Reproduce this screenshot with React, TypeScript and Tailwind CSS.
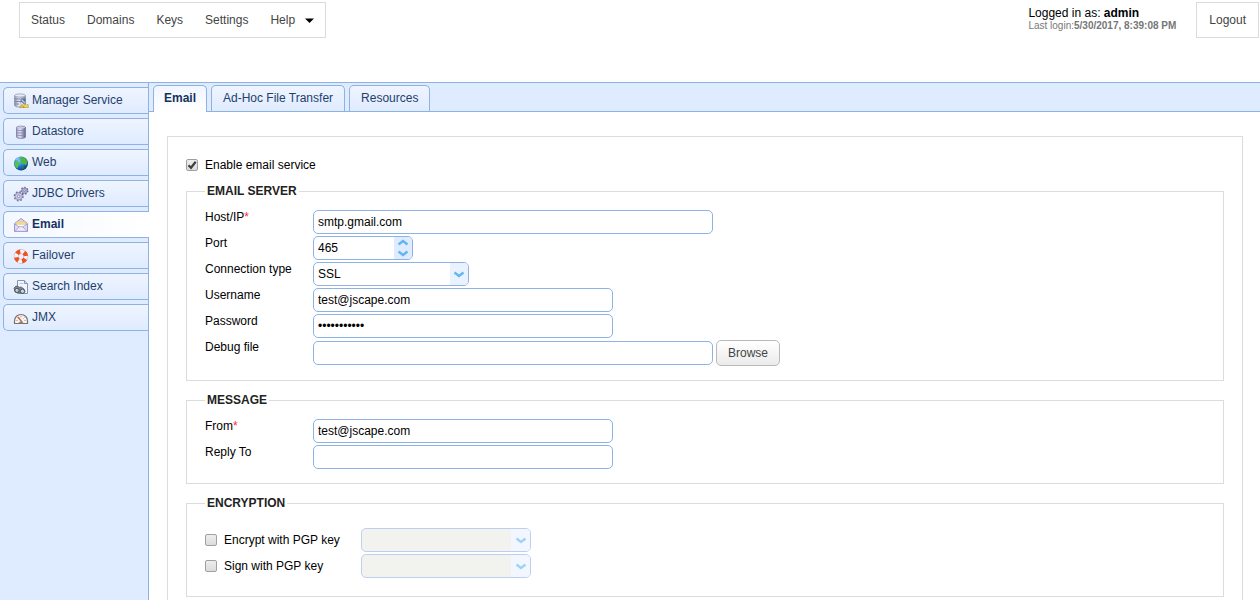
import React, { useState } from "react";

type IconProps = { children: React.ReactNode };

function Icon({ children }: IconProps) {
  return (
    <svg viewBox="0 0 16 16" className="mt-[3px] size-4 shrink-0" aria-hidden="true">
      {children}
    </svg>
  );
}

function ManagerIcon() {
  return (
    <Icon>
      <defs>
        <linearGradient id="mgr" x1="0" x2="1">
          <stop offset="0" stopColor="#8c94a8" />
          <stop offset=".4" stopColor="#e8edf6" />
          <stop offset="1" stopColor="#7f88a4" />
        </linearGradient>
      </defs>
      <path d="M1.500 2.500v9.500c0 1.400 2 2 4.500 2h6.500V2.500z" fill="url(#mgr)" stroke="#858da3" strokeWidth=".7" />
      <ellipse cx="7" cy="2.500" rx="5.500" ry="1.600" fill="#e6ecf6" stroke="#8a92a8" strokeWidth=".7" />
      <path d="M2 6h5M2 8.500h5M2 11h4" stroke="#707a98" strokeWidth=".9" />
      <path d="M7.500 5.500h5v5h-5z" fill="#5d6f9d" />
      <path d="M8.500 6.500l3.500 3.500" stroke="#b9cbe8" strokeWidth="1.200" />
      <path d="M8 9.500l3 3.500" stroke="#e3e6eb" strokeWidth="1.800" />
      <path d="M6.500 14.500l2.500-3 2.300 3z" fill="#f3c62f" stroke="#a98420" strokeWidth=".5" />
      <path d="M10.500 14.500l1-4 2 1.500 1.500-.8.500 3.300z" fill="#f8d84a" stroke="#a98420" strokeWidth=".5" />
    </Icon>
  );
}

function DatastoreIcon() {
  return (
    <Icon>
      <defs>
        <linearGradient id="dst" x1="0" x2="1">
          <stop offset="0" stopColor="#a6a6c6" />
          <stop offset=".4" stopColor="#e4e4f4" />
          <stop offset="1" stopColor="#55557f" />
        </linearGradient>
      </defs>
      <path d="M3.500 3.500c0-1.800 9-1.800 9 0v9.500c0 1.800-9 1.800-9 0z" fill="url(#dst)" stroke="#77779f" strokeWidth=".8" />
      <ellipse cx="8" cy="3.500" rx="4.100" ry="1" fill="#c9c9e2" />
      <path d="M4 6c2 .8 6 .8 8 0M4 8.500c2 .8 6 .8 8 0M4 11c2 .8 6 .8 8 0" fill="none" stroke="#8585ab" strokeWidth=".8" />
    </Icon>
  );
}

function WebIcon() {
  return (
    <Icon>
      <defs>
        <radialGradient id="web" cx=".35" cy=".3" r=".8">
          <stop offset="0" stopColor="#7cc4fa" />
          <stop offset=".55" stopColor="#1d74d2" />
          <stop offset="1" stopColor="#0a2c6c" />
        </radialGradient>
      </defs>
      <circle cx="8" cy="8.500" r="7" fill="url(#web)" />
      <path d="M6.500 2.200c1.500-.7 4-.2 5.500 1.100 1.500 1.400 2.300 3 2.300 4.500l-1.300 2.700-1.500-1.200-2 .3-1.500-1.500.3-2L7 5.500l1-1.500z" fill="#4cb838" />
      <path d="M2 6.500L4.200 6l2 1.500.3 1.700-1.500 2-.3 2.500C2.500 12.500 1.500 10 1.500 8.500z" fill="#55c440" />
      <path d="M8.500 11.500l2 .3.500 1.300-1.700 1.400z" fill="#2a8526" />
      <path d="M3.300 5c1-1.300 2-2 3.200-2.300" stroke="#bce7ff" strokeWidth=".8" fill="none" />
    </Icon>
  );
}

function GearsIcon() {
  return (
    <Icon>
      <circle cx="5.700" cy="10.300" r="4.200" fill="#b9b9d6" stroke="#77779f" strokeWidth="1.800" strokeDasharray="1.650 1.650" />
      <circle cx="5.700" cy="10.300" r="3.400" fill="#cdcde4" stroke="#8f8fb6" strokeWidth=".7" />
      <circle cx="5.700" cy="10.300" r="1.300" fill="#f4f6ff" stroke="#77779e" strokeWidth=".8" />
      <circle cx="11.500" cy="4.700" r="3.200" fill="#a9a9cb" stroke="#6a6a96" strokeWidth="1.600" strokeDasharray="1.440 1.440" />
      <circle cx="11.500" cy="4.700" r="2.500" fill="#bdbdd8" stroke="#7f7fa8" strokeWidth=".6" />
      <circle cx="11.500" cy="4.700" r=".9" fill="#f4f6ff" stroke="#666690" strokeWidth=".7" />
    </Icon>
  );
}

function EmailIcon() {
  return (
    <Icon>
      <path d="M1.500 6.500L8 1.500l6.500 5v8h-13z" fill="#dcd9f5" stroke="#9a95cb" />
      <path d="M3.500 5.500h9V9L8 11 3.500 9z" fill="#fffdf2" />
      <path d="M3.200 4.700h9.600v2.600H3.200z" fill="#f4dc93" stroke="#d8bd70" strokeWidth=".5" />
      <path d="M2 14.300l4.300-4.600h3.400l4.300 4.600z" fill="#eeecfc" stroke="#a19cd0" strokeWidth=".8" />
      <path d="M1.700 7l4.600 3M14.300 7L9.700 10" stroke="#a19cd0" strokeWidth=".9" />
    </Icon>
  );
}

function FailoverIcon() {
  return (
    <Icon>
      <circle cx="8" cy="8.500" r="4.900" fill="none" stroke="#b5aaa8" strokeWidth="4.600" />
      <circle cx="8" cy="8.500" r="4.900" fill="none" stroke="#f7f5f4" strokeWidth="3.800" />
      <circle cx="8" cy="8.500" r="4.900" fill="none" stroke="#f05022" strokeWidth="4.400" strokeDasharray="3.850 3.850" strokeDashoffset="5.200" />
    </Icon>
  );
}

function SearchIcon() {
  return (
    <Icon>
      <path d="M4.500 1.500h7l3 3v10h-10z" fill="#f1f6fd" stroke="#8296b4" />
      <path d="M11.500 1.500v3h3" fill="#cbdaf0" stroke="#8296b4" />
      <path d="M6.500 4.500h4" stroke="#b9c9e0" />
      <path d="M1 9l2-2 2 .3 1.200.9 2-.2 2.800 2 1 2.500-2 2-8-1.500z" fill="#7b848d" stroke="#4d555e" strokeWidth=".7" />
      <circle cx="4" cy="11.500" r="2.100" fill="#b4c2cd" stroke="#3d454d" strokeWidth=".8" />
      <circle cx="9.500" cy="12.300" r="2.100" fill="#b9d9e6" stroke="#3d454d" strokeWidth=".8" />
      <path d="M3 11l1-.8M8.500 11.800l1-.8" stroke="#fff" strokeWidth=".8" />
    </Icon>
  );
}

function GaugeIcon() {
  return (
    <Icon>
      <path d="M1.500 13.500V11C1.500 7 4.500 4.500 8 4.500s6.500 2.500 6.500 6.500v2.500z" fill="#f6f4f1" stroke="#77736f" strokeWidth="1.200" />
      <path d="M3.500 10.500h1M4.700 7.700l.7.700M8 6.200v1M11.300 7.700l-.7.700M12.500 10.500h-1" stroke="#77736f" strokeWidth=".8" />
      <path d="M5 7l4 5" stroke="#e2562d" strokeWidth="1.300" />
      <path d="M5.500 13.200c.5-2.200 4.500-2.200 5 0z" fill="#8a8681" />
    </Icon>
  );
}

const sections = [
  { name: "Manager Service", icon: ManagerIcon },
  { name: "Datastore", icon: DatastoreIcon },
  { name: "Web", icon: WebIcon },
  { name: "JDBC Drivers", icon: GearsIcon },
  { name: "Email", icon: EmailIcon },
  { name: "Failover", icon: FailoverIcon },
  { name: "Search Index", icon: SearchIcon },
  { name: "JMX", icon: GaugeIcon },
];

const tabs = ["Email", "Ad-Hoc File Transfer", "Resources"];

const inputClass =
  "block h-6 rounded-[5px] border border-[#8db2e3] bg-white px-1 text-xs text-black outline-none focus:border-[#4f8ad6] disabled:bg-[#ebece5]";

function Chevron({ up = false }: { up?: boolean }) {
  return (
    <svg viewBox="0 0 12 7" className="h-[7px] w-3" aria-hidden="true">
      <path d={up ? "M1.500 5.500L6 2l4.500 3.500" : "M1.500 1.500L6 5l4.500-3.500"} fill="none" stroke="#62b5f2" strokeWidth="2.400" />
    </svg>
  );
}

function Field({ id, label, required, children }: { id: string; label: string; required?: boolean; children: React.ReactNode }) {
  return (
    <div className="grid grid-cols-[108px_1fr] items-start">
      <label htmlFor={id} className="leading-[14px]">
        {label}
        {required && <span className="text-red-500">*</span>}
      </label>
      {children}
    </div>
  );
}

function Group({ title, children, className }: { title: string; children: React.ReactNode; className: string }) {
  return (
    <fieldset className={`border border-[#dcdcdc] px-[18px] ${className}`}>
      <legend className="px-0.5 text-xs leading-[14px] font-bold text-[#222] uppercase">{title}</legend>
      {children}
    </fieldset>
  );
}

function Check({ id, defaultChecked }: { id: string; defaultChecked?: boolean }) {
  return (
    <span className="relative block size-3">
      <input
        id={id}
        type="checkbox"
        defaultChecked={defaultChecked}
        className="peer block size-3 appearance-none rounded-xs border border-[#a0a0a0] bg-linear-to-b from-[#ededed] to-[#dcdcdc]"
      />
      <svg viewBox="0 0 12 12" className="pointer-events-none absolute inset-0 hidden size-3 peer-checked:block" aria-hidden="true">
        <path d="M2.500 6.300L5 8.800 9.700 2.800" fill="none" stroke="#3f3f3f" strokeWidth="2.200" />
      </svg>
    </span>
  );
}

function PgpRow({ id, label }: { id: string; label: string }) {
  return (
    <div className="grid grid-cols-[19px_137px_1fr] items-center">
      <Check id={id} />
      <label htmlFor={id}>{label}</label>
      <div className="relative w-[170px] opacity-60">
        <select disabled aria-label={`${label} name`} className={`${inputClass} w-full appearance-none`} />
        <span className="pointer-events-none absolute inset-y-px right-px flex w-[19px] items-center justify-center rounded-r bg-[#eaf2ff]">
          <Chevron />
        </span>
      </div>
    </div>
  );
}

export default function App() {
  const [port, setPort] = useState(465);

  return (
    <div className="flex h-screen flex-col overflow-hidden bg-white font-['Liberation_Sans',Arial,sans-serif] text-xs text-black">
      <header className="flex h-[82px] shrink-0 items-start justify-between pt-0.5 pr-px pl-[19px]">
        <nav className="flex h-9 items-center gap-[22px] border border-[#dcdcdc] px-[11px] text-[#444]">
          <a href="#status">Status</a>
          <a href="#domains">Domains</a>
          <a href="#keys">Keys</a>
          <a href="#settings">Settings</a>
          <button type="button" className="flex items-center gap-2.5">
            Help
            <svg viewBox="0 0 9 5" className="h-[5px] w-[9px]" aria-hidden="true">
              <path d="M0 .500h9L4.500 5z" fill="#000" />
            </svg>
          </button>
        </nav>
        <div className="flex items-start gap-5">
          <div className="pt-1">
            <p className="leading-[14px]">
              Logged in as: <b>admin</b>
            </p>
            <p className="text-[10px] leading-3 text-[#777]">
              Last login:<b>5/30/2017, 8:39:08 PM</b>
            </p>
          </div>
          <button type="button" className="h-9 border border-[#dcdcdc] px-3 text-[#444]">
            Logout
          </button>
        </div>
      </header>

      <div className="flex min-h-0 flex-1 border-t border-[#8db2e3]">
        <aside className="flex w-[149px] shrink-0 flex-col gap-1 border-r border-[#8db2e3] bg-[#dfebff] pt-1 pl-[3px]">
          {sections.map(({ name, icon: SectionIcon }) => (
            <button
              key={name}
              type="button"
              className={
                name === "Email"
                  ? "-mr-px flex h-[27px] items-center gap-[3px] rounded-l-[5px] border border-r-0 border-[#8db2e3] bg-linear-to-r from-[#f3f8ff] to-white pb-0.5 pl-[9px] font-bold text-[#15325f]"
                  : "flex h-[27px] items-center gap-[3px] rounded-l-[5px] border border-r-0 border-[#8db2e3] bg-linear-to-b from-[#eff5ff] to-[#dfebff] pb-0.5 pl-[9px] text-[#243f6b]"
              }
            >
              <SectionIcon />
              {name}
            </button>
          ))}
        </aside>

        <main className="min-w-0 flex-1">
          <div role="tablist" className="flex h-[29px] items-end gap-1 border-b border-[#8db2e3] bg-[#dfebff] pl-1">
            {tabs.map((tab) => (
              <button
                key={tab}
                type="button"
                role="tab"
                aria-selected={tab === "Email"}
                className={
                  tab === "Email"
                    ? "-mb-px h-[27px] rounded-t-[5px] border border-b-0 border-[#8db2e3] bg-linear-to-b from-[#f0f6ff] to-white px-2.5 pb-0.5 font-bold text-[#15325f]"
                    : "h-[26px] rounded-t-[5px] border border-b-0 border-[#8db2e3] bg-linear-to-b from-[#eff5ff] to-[#dfebff] px-[11px] pb-0.5 text-[#243f6b]"
                }
              >
                {tab}
              </button>
            ))}
          </div>

          <form className="mt-6 mr-[17px] ml-[18px] flex flex-col gap-3 border border-[#dcdcdc] p-[18px]" onSubmit={(e) => e.preventDefault()}>
            <div className="flex h-[17px] items-center gap-[7px] pt-0.5">
              <Check id="enable" defaultChecked />
              <label htmlFor="enable">Enable email service</label>
            </div>

            <Group title="Email Server" className="pt-3 pb-3.5">
              <div className="flex flex-col gap-0.5">
                <Field id="host" label="Host/IP" required>
                  <input id="host" type="text" defaultValue="smtp.gmail.com" className={`${inputClass} w-[400px]`} />
                </Field>
                <Field id="port" label="Port">
                  <div className="flex h-6 w-[100px] overflow-hidden rounded-[5px] border border-[#8db2e3]">
                    <input
                      id="port"
                      type="text"
                      inputMode="numeric"
                      value={port}
                      onChange={(e) => setPort(Number(e.target.value) || 0)}
                      className="min-w-0 flex-1 px-1 text-xs outline-none"
                    />
                    <div className="flex w-[18px] flex-col bg-[#dfebff]">
                      <button type="button" aria-label="Increase port" onClick={() => setPort(port + 1)} className="flex flex-1 items-center justify-center">
                        <Chevron up />
                      </button>
                      <button type="button" aria-label="Decrease port" onClick={() => setPort(port - 1)} className="flex flex-1 items-center justify-center">
                        <Chevron />
                      </button>
                    </div>
                  </div>
                </Field>
                <Field id="connection" label="Connection type">
                  <div className="relative w-[156px]">
                    <select id="connection" className={`${inputClass} w-full appearance-none`}>
                      <option>SSL</option>
                    </select>
                    <span className="pointer-events-none absolute inset-y-px right-px flex w-[18px] items-center justify-center rounded-r bg-[#eaf2ff]">
                      <Chevron />
                    </span>
                  </div>
                </Field>
                <Field id="username" label="Username">
                  <input id="username" type="text" defaultValue="test@jscape.com" className={`${inputClass} w-[300px]`} />
                </Field>
                <Field id="password" label="Password">
                  <input id="password" type="password" defaultValue="password123" className={`${inputClass} w-[300px]`} />
                </Field>
                <Field id="debug" label="Debug file">
                  <div className="flex items-center gap-[3px]">
                    <input id="debug" type="text" className={`${inputClass} w-[400px]`} />
                    <button type="button" className="h-[26px] rounded-[5px] border border-[#b9b9b9] bg-linear-to-b from-white to-[#ebebeb] px-[11px] text-[#444]">
                      Browse
                    </button>
                  </div>
                </Field>
              </div>
            </Group>

            <Group title="Message" className="pt-3 pb-3.5">
              <div className="flex flex-col gap-0.5">
                <Field id="from" label="From" required>
                  <input id="from" type="text" defaultValue="test@jscape.com" className={`${inputClass} w-[300px]`} />
                </Field>
                <Field id="reply" label="Reply To">
                  <input id="reply" type="text" className={`${inputClass} w-[300px]`} />
                </Field>
              </div>
            </Group>

            <Group title="Encryption" className="pt-[18px] pb-[18px]">
              <div className="flex flex-col gap-0.5">
                <PgpRow id="encrypt" label="Encrypt with PGP key" />
                <PgpRow id="sign" label="Sign with PGP key" />
              </div>
            </Group>
          </form>
        </main>
      </div>
    </div>
  );
}
